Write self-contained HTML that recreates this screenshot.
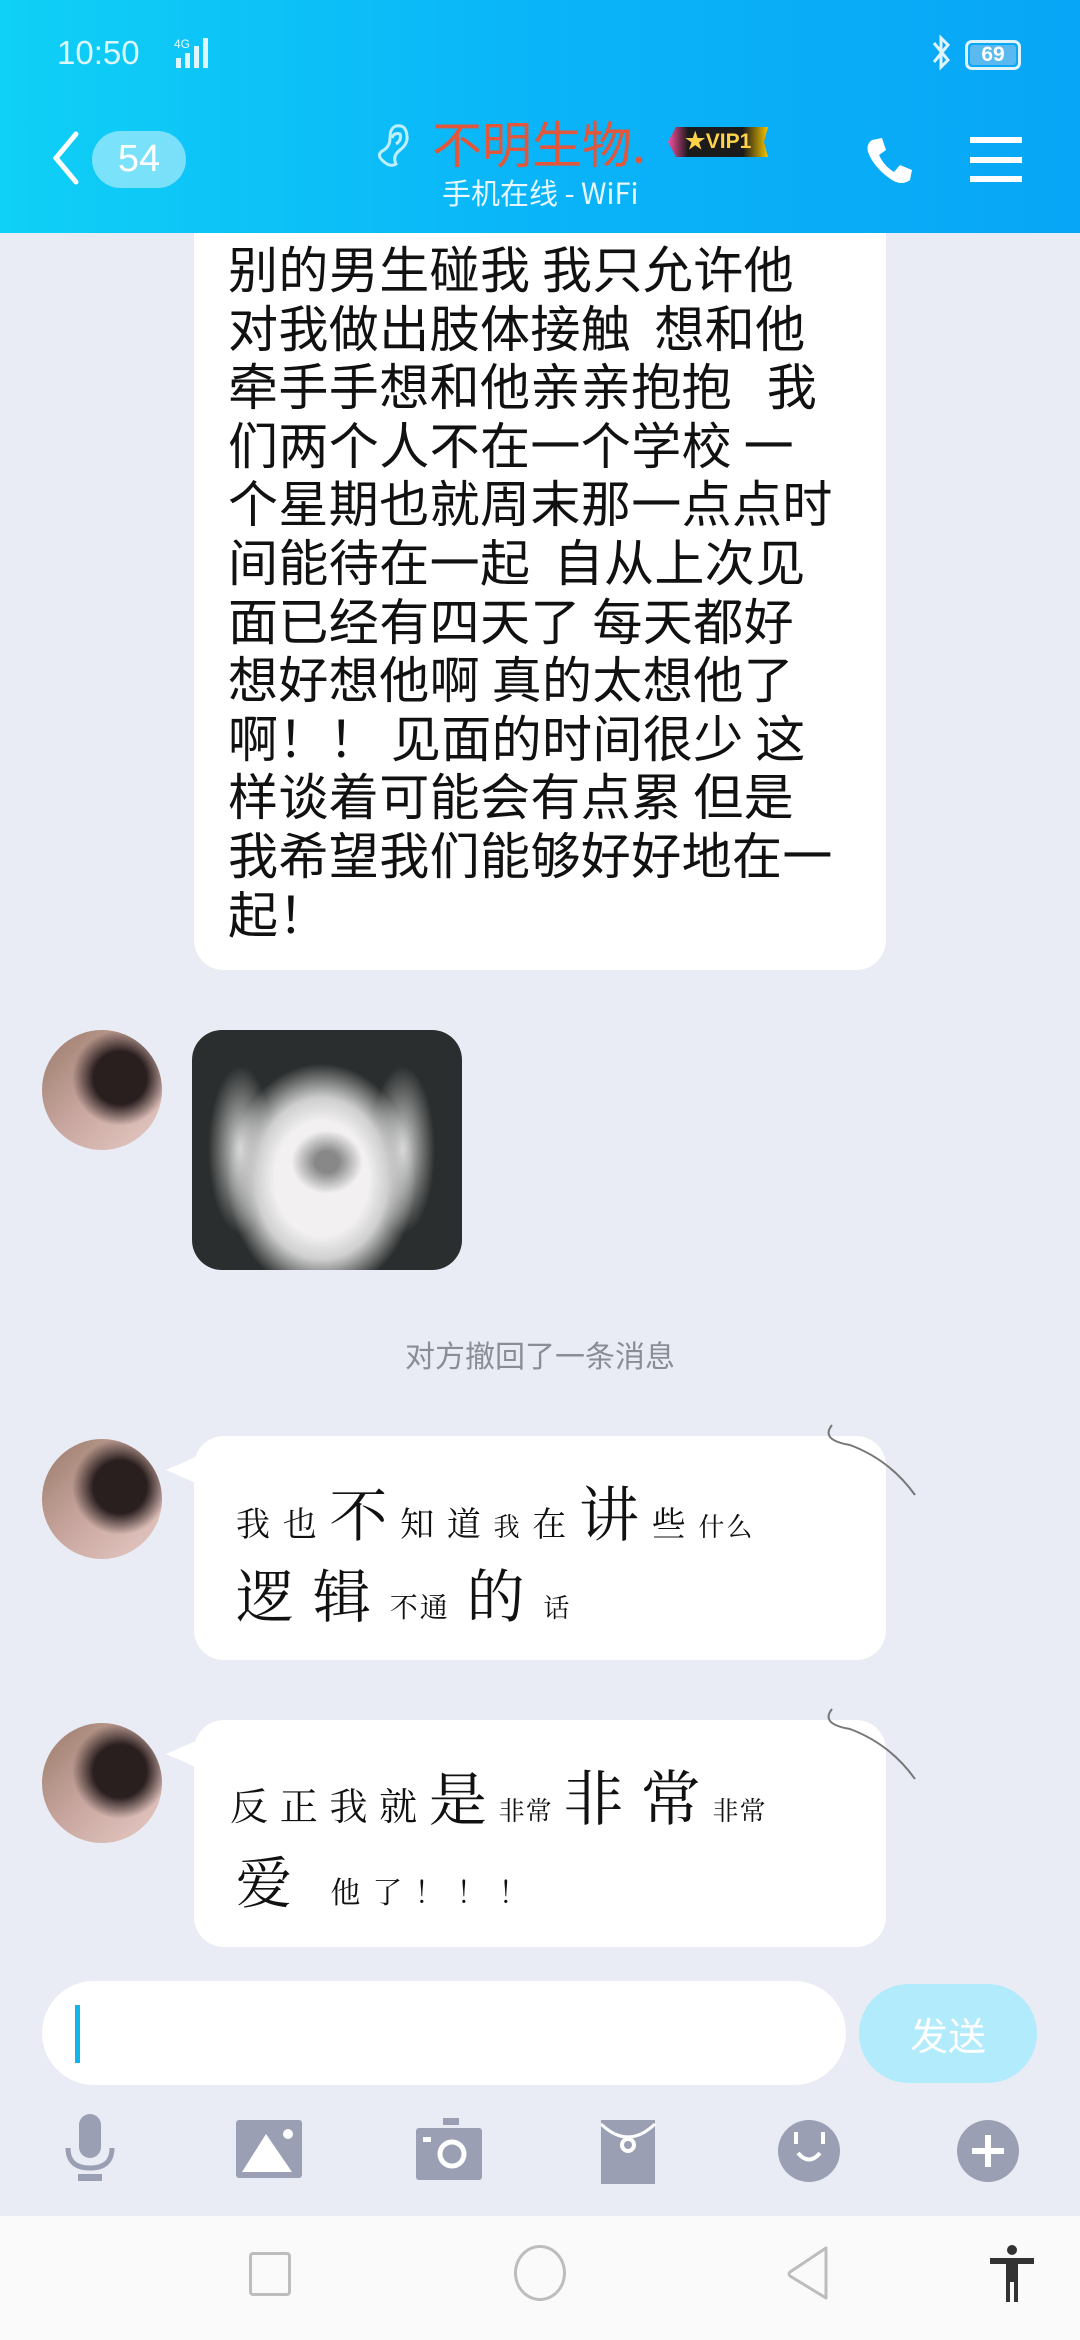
<!DOCTYPE html>
<html><head><meta charset="utf-8">
<style>
*{margin:0;padding:0;box-sizing:border-box}
body{width:1080px;height:2340px;overflow:hidden;background:#e9ecf4;font-family:"Liberation Sans","Noto Sans CJK SC",sans-serif;position:relative}
.abs{position:absolute}
.bub{position:absolute;background:#fff;border-radius:30px}
.t1{position:absolute;left:228px;top:238px;font-size:50px;line-height:58.6px;color:#111;white-space:pre;font-family:"Noto Sans CJK SC",sans-serif;letter-spacing:0.4px}
.av{position:absolute;left:42px;width:120px;height:120px;border-radius:50%;background:radial-gradient(circle at 65% 40%,#2a1f1f 0 25%,transparent 45%),linear-gradient(135deg,#9a7a6a,#c9a7a0 50%,#e7cbc5);overflow:hidden}
.hw{position:absolute;font-family:"Noto Serif CJK SC",serif;color:#111;white-space:nowrap}
.ic{position:absolute;top:2114px}
.tail{position:absolute;left:166px;width:34px;height:30px;background:#fff;clip-path:polygon(0 50%,100% 0,100% 100%)}
</style></head><body>
<div class="bub" style="left:194px;top:200px;width:692px;height:770px;border-radius:0 0 30px 30px"></div>
<div class="t1">别的男生碰我 我只允许他
对我做出肢体接触  想和他
牵手手想和他亲亲抱抱   我
们两个人不在一个学校 一
个星期也就周末那一点点时
间能待在一起  自从上次见
面已经有四天了 每天都好
想好想他啊 真的太想他了
啊！！ 见面的时间很少 这
样谈着可能会有点累 但是
我希望我们能够好好地在一
起！</div>

<div class="abs" style="left:0;top:0;width:1080px;height:233px;background:linear-gradient(90deg,#0fd0f6,#0ab4f8 50%,#08a6f6)"></div>
<div class="abs" style="left:57px;top:34px;font-size:33px;color:rgba(255,255,255,.85)">10:50</div>
<svg class="abs" style="left:172px;top:36px" width="50" height="34"><text x="2" y="12" font-size="12" fill="#e8f8ff" font-family="Liberation Sans">4G</text><g fill="#dff6ff"><rect x="4" y="22" width="5" height="10"/><rect x="13" y="17" width="5" height="15"/><rect x="22" y="10" width="5" height="22"/><rect x="31" y="2" width="5" height="30"/></g></svg>
<svg class="abs" style="left:928px;top:32px" width="26" height="42"><path d="M6 11 L20 28 L13 35 L13 6 L20 13 L6 30" fill="none" stroke="#dff4ff" stroke-width="3"/></svg>
<div class="abs" style="left:965px;top:40px;width:56px;height:30px;border:3px solid #dff4ff;border-radius:7px;color:#fff;font-size:21px;text-align:center;line-height:24px;font-weight:bold"><span style="background:#5ab9ee;display:block;margin:2px;border-radius:3px;line-height:20px">69</span></div>
<svg class="abs" style="left:48px;top:130px" width="36" height="56"><path d="M28 4 L8 28 L28 52" fill="none" stroke="#fff" stroke-width="5" stroke-linecap="round"/></svg>
<div class="abs" style="left:92px;top:131px;width:94px;height:57px;border-radius:29px;background:rgba(255,255,255,.45);color:#fff;font-size:38px;text-align:center;line-height:57px">54</div>
<svg class="abs" style="left:372px;top:120px" width="40" height="50"><path d="M10 40 Q4 34 12 30 Q18 26 18 18 Q18 8 24 6 Q34 4 35 16 Q36 24 28 30 Q20 36 24 44 Q18 48 10 40 Z M20 18 Q22 12 28 14 Q30 20 24 24" fill="none" stroke="#bfefff" stroke-width="3"/></svg>
<div class="abs" style="left:432px;top:112px;font-size:50px;color:#e0573c;font-family:'Noto Sans CJK SC',sans-serif;line-height:60px">不明生物.</div>
<div class="abs" style="left:668px;top:127px;width:100px;height:30px;background:linear-gradient(90deg,#ff4fa0,#1b1b1b 20%,#1b1b1b 75%,#f5c400);clip-path:polygon(8% 0,100% 0,96% 50%,100% 100%,8% 100%,0 50%);color:#ffd24a;font-size:21px;font-weight:bold;line-height:30px;text-align:center">★VIP1</div>
<div class="abs" style="left:442px;top:172px;font-size:29px;color:#e6f7ff;font-family:'Noto Sans CJK SC',sans-serif;line-height:40px">手机在线 - WiFi</div>
<svg class="abs" style="left:862px;top:134px" width="54" height="54"><path d="M10 6 L20 4 L24 16 L17 21 Q22 32 32 38 L38 31 L50 36 L48 46 Q40 52 30 46 Q12 34 6 18 Q4 10 10 6Z" fill="#fff"/></svg>
<div class="abs" style="left:970px;top:137px;width:52px;height:6px;background:#fff"></div>
<div class="abs" style="left:970px;top:157px;width:52px;height:6px;background:#fff"></div>
<div class="abs" style="left:970px;top:176px;width:52px;height:6px;background:#fff"></div>

<div class="av" style="top:1030px"></div>
<div class="abs" style="left:192px;top:1030px;width:270px;height:240px;border-radius:30px;background:radial-gradient(ellipse 22% 22% at 50% 55%,#888 0 20%,transparent 60%),radial-gradient(ellipse 35% 48% at 48% 62%,#f2f0f0 0 50%,#cfcfcf 70%,transparent 100%),radial-gradient(ellipse 12% 35% at 18% 50%,#ddd,transparent),radial-gradient(ellipse 12% 35% at 78% 50%,#ddd,transparent),#2b2e2e"></div>
<div class="abs" style="left:0;top:1332px;width:1080px;text-align:center;font-size:30px;color:#8a8d96;font-family:'Noto Sans CJK SC',sans-serif">对方撤回了一条消息</div>

<div class="av" style="top:1439px"></div>
<div class="bub" style="left:194px;top:1436px;width:692px;height:224px"></div>
<div class="tail" style="top:1455px"></div>
<svg class="abs" style="left:820px;top:1420px" width="100" height="80"><path d="M12 5 Q0 20 30 25 Q70 40 95 75" fill="none" stroke="#777" stroke-width="2"/></svg>
<div class="hw" style="left:236px;top:1468px;font-size:34px;letter-spacing:2px">我 也 <span style="font-size:58px">不</span> 知 道 <span style="font-size:26px">我</span> 在 <span style="font-size:60px">讲</span> 些 <span style="font-size:26px">什么</span></div>
<div class="hw" style="left:236px;top:1550px;font-size:58px;letter-spacing:2px">逻 辑 <span style="font-size:28px">不通</span> 的 <span style="font-size:26px">话</span></div>

<div class="av" style="top:1723px"></div>
<div class="bub" style="left:194px;top:1720px;width:692px;height:227px"></div>
<div class="tail" style="top:1739px"></div>
<svg class="abs" style="left:820px;top:1704px" width="100" height="80"><path d="M12 5 Q0 20 30 25 Q70 40 95 75" fill="none" stroke="#777" stroke-width="2"/></svg>
<div class="hw" style="left:230px;top:1752px;font-size:38px;letter-spacing:1px">反 正 我 就 <span style="font-size:58px">是</span> <span style="font-size:26px">非常</span> <span style="font-size:60px">非 常</span> <span style="font-size:26px">非常</span></div>
<div class="hw" style="left:236px;top:1840px;font-size:56px;letter-spacing:12px">爱 <span style="font-size:30px">他了！！！</span></div>

<div class="abs" style="left:42px;top:1981px;width:804px;height:104px;border-radius:52px;background:#fff"></div>
<div class="abs" style="left:75px;top:2005px;width:5px;height:58px;background:#12b5e8"></div>
<div class="abs" style="left:859px;top:1984px;width:178px;height:99px;border-radius:50px;background:#b2ebfb;color:#fff;font-size:38px;text-align:center;line-height:99px;font-family:'Noto Sans CJK SC',sans-serif">发送</div>

<svg class="ic" style="left:60px" width="60" height="70"><rect x="19" y="0" width="22" height="44" rx="11" fill="#9a9fb3"/><path d="M8 34 Q8 54 30 54 Q52 54 52 34" fill="none" stroke="#9a9fb3" stroke-width="5"/><rect x="18" y="60" width="24" height="7" fill="#9a9fb3"/></svg>
<svg class="ic" style="left:236px;top:2120px" width="68" height="60"><rect x="0" y="0" width="66" height="58" rx="3" fill="#9a9fb3"/><path d="M6 52 L30 14 L56 52Z" fill="#fff"/><circle cx="52" cy="14" r="5" fill="#fff"/></svg>
<svg class="ic" style="left:416px;top:2118px" width="68" height="64"><rect x="27" y="0" width="16" height="7" fill="#9a9fb3"/><rect x="0" y="10" width="66" height="52" rx="3" fill="#9a9fb3"/><circle cx="36" cy="36" r="12" fill="none" stroke="#fff" stroke-width="5"/><rect x="7" y="19" width="8" height="5" fill="#fff"/></svg>
<svg class="ic" style="left:601px;top:2120px" width="56" height="66"><path d="M0 0 L54 0 L54 64 L0 64Z" fill="#9a9fb3"/><path d="M0 4 Q27 30 54 4" fill="none" stroke="#fff" stroke-width="3"/><circle cx="27" cy="25" r="8" fill="#fff"/><circle cx="27" cy="25" r="4" fill="#9a9fb3"/></svg>
<svg class="ic" style="left:778px;top:2118px" width="64" height="66"><circle cx="31" cy="33" r="31" fill="#9a9fb3"/><rect x="16" y="14" width="4" height="12" fill="#fff"/><rect x="43" y="14" width="4" height="12" fill="#fff"/><path d="M20 35 Q31 48 42 35" fill="none" stroke="#fff" stroke-width="4"/></svg>
<svg class="ic" style="left:957px;top:2118px" width="64" height="66"><circle cx="31" cy="33" r="31" fill="#9a9fb3"/><rect x="28" y="17" width="6" height="32" fill="#fff"/><rect x="15" y="30" width="32" height="6" fill="#fff"/></svg>

<div class="abs" style="left:0;top:2216px;width:1080px;height:124px;background:#fafafa"></div>
<div class="abs" style="left:249px;top:2252px;width:42px;height:44px;border:3px solid #bdbdbd;border-radius:4px"></div>
<div class="abs" style="left:514px;top:2245px;width:52px;height:56px;border:3px solid #bdbdbd;border-radius:50%"></div>
<svg class="abs" style="left:784px;top:2244px" width="48" height="58"><path d="M42 4 L6 28 Q4 30 6 32 L42 54 Z" fill="none" stroke="#bdbdbd" stroke-width="3" stroke-linejoin="round"/></svg>
<svg class="abs" style="left:988px;top:2244px" width="50" height="60"><circle cx="24" cy="6" r="5" fill="#333"/><path d="M2 14 L46 14 L46 20 L30 20 L30 58 L26 58 L26 38 L22 38 L22 58 L18 58 L18 20 L2 20Z" fill="#333"/></svg>
</body></html>
